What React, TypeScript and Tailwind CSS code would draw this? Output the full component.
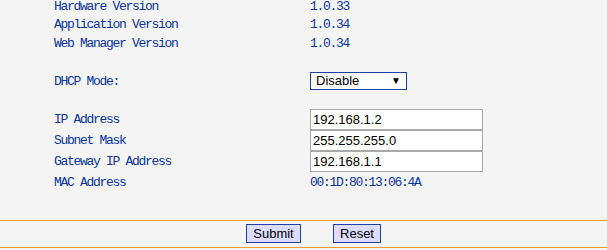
import React from "react";

const txt = "text-[13px] leading-[13px] tracking-[-1.3px] text-[#08359f] whitespace-pre";
const label = `w-[256px] shrink-0 ${txt}`;
const mono = { fontFamily: '"Liberation Mono", "DejaVu Sans Mono", monospace' };
const arial = { fontFamily: '"Liberation Sans", Arial, sans-serif' };

function Row({ name, children, h }: { name: string; children?: React.ReactNode; h: string }) {
  return (
    <div className={`flex items-center shrink-0 pl-[54px] ${h}`}>
      <div className={label} style={mono}>{name}</div>
      {children}
    </div>
  );
}

function TextBox({ value }: { value: string }) {
  return (
    <div
      className="w-[173px] h-[21px] border border-[#a9a9a9] bg-white flex items-center pl-[2px] text-[13px] text-black"
      style={arial}
    >
      {value}
    </div>
  );
}

export default function App() {
  return (
    <div className="w-[607px] h-[250px] bg-[#f4f4f4] overflow-hidden flex flex-col">
      <div className="-mt-[3px] flex flex-col shrink-0">
        <Row name="Hardware Version" h="h-[18px]">
          <span className={txt} style={mono}>1.0.33</span>
        </Row>
        <Row name="Application Version" h="h-[19px]">
          <span className={txt} style={mono}>1.0.34</span>
        </Row>
        <Row name="Web Manager Version" h="h-[19px]">
          <span className={txt} style={mono}>1.0.34</span>
        </Row>
        <div className="h-[19px] shrink-0" />
        <Row name="DHCP Mode:" h="h-[18px]">
          <div
            className="w-[97px] h-[18px] border border-[#1f3fa8] bg-white flex items-center justify-between pl-[5px] pr-[5px] text-[13px] text-black"
            style={arial}
          >
            <span>Disable</span>
            <span className="text-[10px] leading-none">▼</span>
          </div>
        </Row>
        <div className="h-[19px] shrink-0" />
        <Row name="IP Address" h="h-[21px]">
          <TextBox value="192.168.1.2" />
        </Row>
        <Row name="Subnet Mask" h="h-[21px]">
          <TextBox value="255.255.255.0" />
        </Row>
        <Row name="Gateway IP Address" h="h-[21px]">
          <TextBox value="192.168.1.1" />
        </Row>
        <Row name="MAC Address" h="h-[20px]">
          <span className={txt} style={mono}>00:1D:80:13:06:4A</span>
        </Row>
      </div>
      <div className="h-[28px] shrink-0" />
      <div className="h-[1px] shrink-0 bg-[#ff9933]" />
      <div className="h-[26px] shrink-0 flex items-start pt-[3px] pl-[246px] gap-[32px]">
        <button
          className="w-[55px] h-[19px] border border-[#1f3fa8] bg-[#dcdcff] text-[13px] text-black flex items-center justify-center"
          style={arial}
        >
          Submit
        </button>
        <button
          className="w-[48px] h-[19px] border border-[#1f3fa8] bg-[#dcdcff] text-[13px] text-black flex items-center justify-center"
          style={arial}
        >
          Reset
        </button>
      </div>
      <div className="h-[1px] shrink-0 bg-[#ff9933]" />
    </div>
  );
}
